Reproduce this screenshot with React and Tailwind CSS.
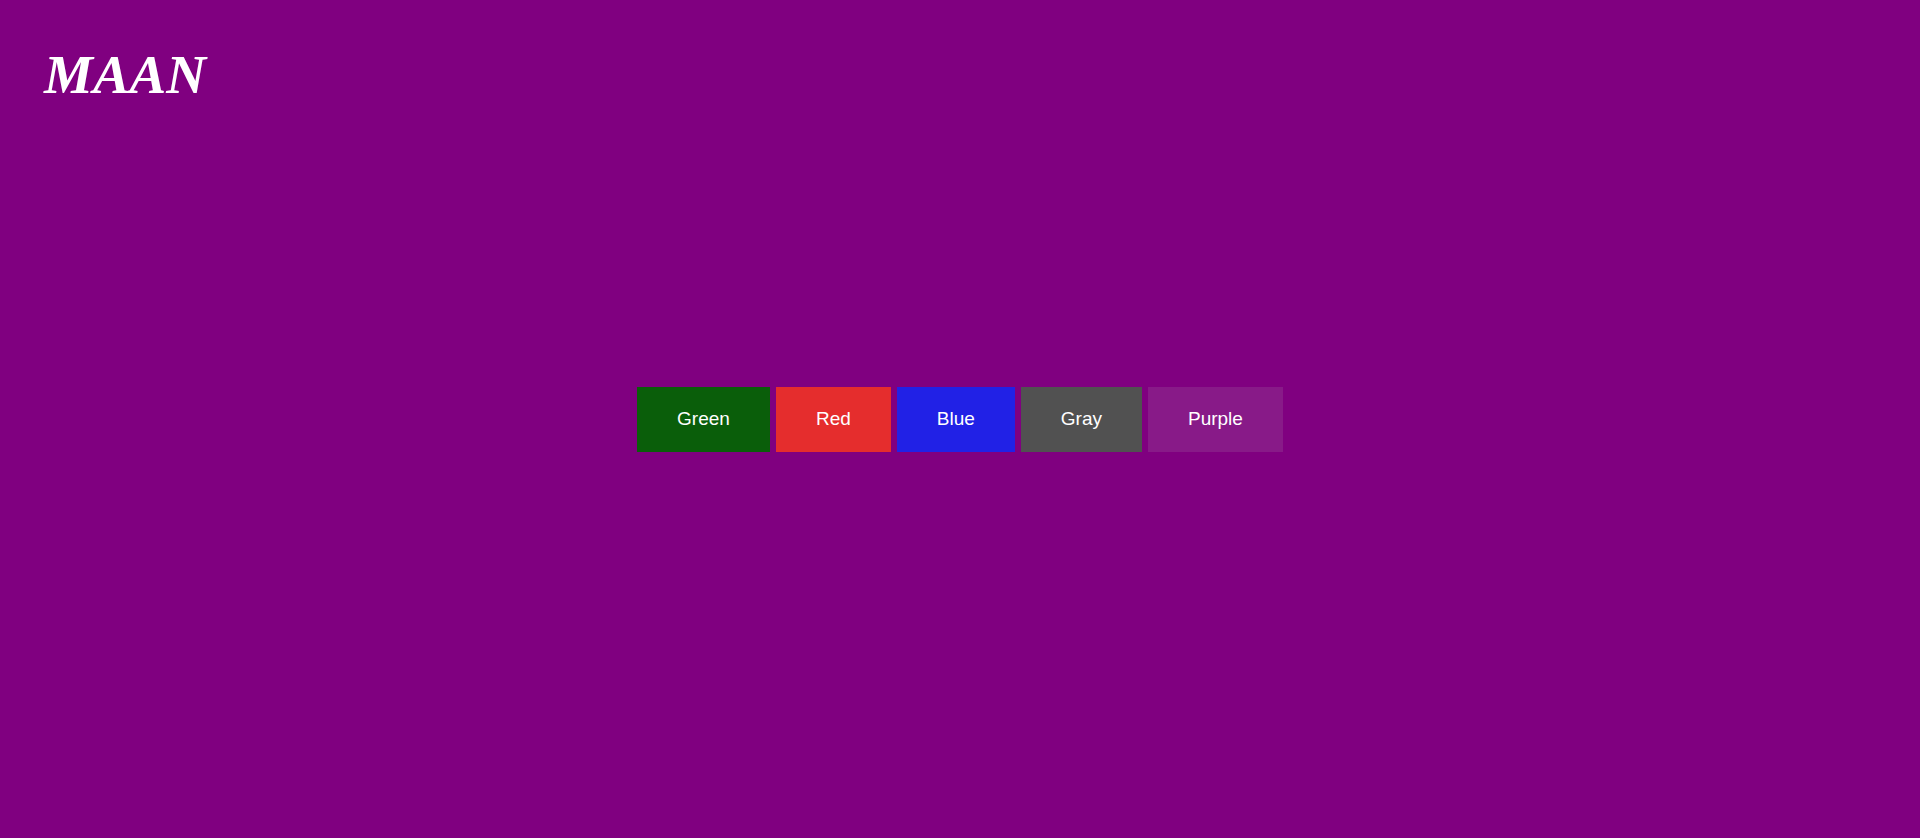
export default function App() {
  const buttons = [
    { label: "Green", cls: "bg-[#0a5e0a]" },
    { label: "Red", cls: "bg-[#e52d2d]" },
    { label: "Blue", cls: "bg-[#2121e6]" },
    { label: "Gray", cls: "bg-[#515151]" },
    { label: "Purple", cls: "bg-[#881a88]" },
  ];
  return (
    <div className="grid h-screen w-full grid-rows-[1fr_auto_1fr] bg-[#800080]">
      <header className="pl-[44px] pt-[45px]">
        <h1 className="font-['Liberation_Serif',serif] text-[55px] font-bold italic leading-[60px] text-white">
          MAAN
        </h1>
      </header>
      <div className="flex justify-center gap-[6px]">
        {buttons.map((b) => (
          <button
            key={b.label}
            className={`${b.cls} h-[65px] px-[40px] font-['Liberation_Sans',Arial,sans-serif] text-[19px] text-white`}
          >
            {b.label}
          </button>
        ))}
      </div>
      <div />
    </div>
  );
}
